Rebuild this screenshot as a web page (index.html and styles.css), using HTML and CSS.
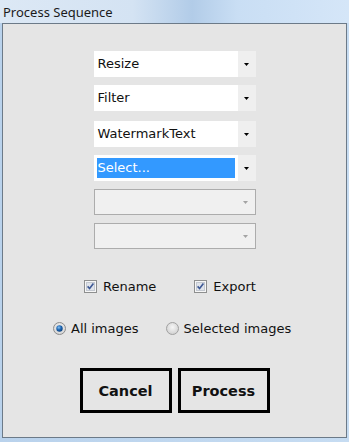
FILE: index.html
```html
<!DOCTYPE html>
<html>
<head>
<meta charset="utf-8">
<link rel="stylesheet" href="styles.css">
</head>
<body>
<div class="window">
  <div class="titlebar"><span class="title">Process Sequence</span></div>
  <div class="panel">
    <div class="combos">
      <div class="combo"><span class="combo-text">Resize</span><span class="combo-btn"><svg width="5" height="3" viewBox="0 0 5 3"><path d="M0 0h5L2.5 3z" fill="#000"/></svg></span></div>
      <div class="combo"><span class="combo-text">Filter</span><span class="combo-btn"><svg width="5" height="3" viewBox="0 0 5 3"><path d="M0 0h5L2.5 3z" fill="#000"/></svg></span></div>
      <div class="combo combo--spaced"><span class="combo-text">WatermarkText</span><span class="combo-btn"><svg width="5" height="3" viewBox="0 0 5 3"><path d="M0 0h5L2.5 3z" fill="#000"/></svg></span></div>
      <div class="combo"><span class="combo-text combo-text--selected">Select...</span><span class="combo-btn"><svg width="5" height="3" viewBox="0 0 5 3"><path d="M0 0h5L2.5 3z" fill="#000"/></svg></span></div>
      <div class="combo combo--disabled"><span class="combo-text"></span><span class="combo-btn"><svg width="5" height="3" viewBox="0 0 5 3"><path d="M0 0h5L2.5 3z" fill="#a3a3a3"/></svg></span></div>
      <div class="combo combo--disabled"><span class="combo-text"></span><span class="combo-btn"><svg width="5" height="3" viewBox="0 0 5 3"><path d="M0 0h5L2.5 3z" fill="#a3a3a3"/></svg></span></div>
    </div>

    <div class="checks">
      <label class="check">
        <svg class="box" width="13" height="13" viewBox="0 0 13 13"><rect x="0.5" y="0.5" width="12" height="12" fill="#f6f6f6" stroke="#8e8f8f"/><rect x="2.5" y="2.5" width="8" height="8" fill="#dfe3ea" stroke="#c3c8d0"/><path d="M3.6 6.4 L5.6 8.6 L9.4 3.6" fill="none" stroke="#3d5894" stroke-width="1.6"/></svg>
        <span>Rename</span>
      </label>
      <label class="check">
        <svg class="box" width="13" height="13" viewBox="0 0 13 13"><rect x="0.5" y="0.5" width="12" height="12" fill="#f6f6f6" stroke="#8e8f8f"/><rect x="2.5" y="2.5" width="8" height="8" fill="#dfe3ea" stroke="#c3c8d0"/><path d="M3.6 6.4 L5.6 8.6 L9.4 3.6" fill="none" stroke="#3d5894" stroke-width="1.6"/></svg>
        <span>Export</span>
      </label>
    </div>

    <div class="radios">
      <label class="radio">
        <svg width="13" height="13" viewBox="0 0 13 13">
          <defs>
            <radialGradient id="rg1" cx="0.5" cy="0.4" r="0.6"><stop offset="0" stop-color="#f2f2f2"/><stop offset="1" stop-color="#d4d4d4"/></radialGradient>
            <radialGradient id="rdot" cx="0.4" cy="0.35" r="0.7"><stop offset="0" stop-color="#86c2f5"/><stop offset="0.5" stop-color="#1f67b3"/><stop offset="1" stop-color="#0b3e7a"/></radialGradient>
          </defs>
          <circle cx="6.5" cy="6.5" r="6" fill="url(#rg1)" stroke="#8c8c8c"/>
          <circle cx="6.5" cy="6.5" r="3.2" fill="url(#rdot)"/>
        </svg>
        <span>All images</span>
      </label>
      <label class="radio">
        <svg width="13" height="13" viewBox="0 0 13 13">
          <defs>
            <radialGradient id="rg2" cx="0.5" cy="0.4" r="0.6"><stop offset="0" stop-color="#f6f6f6"/><stop offset="1" stop-color="#d0d0d0"/></radialGradient>
          </defs>
          <circle cx="6.5" cy="6.5" r="6" fill="url(#rg2)" stroke="#a0a0a0"/>
        </svg>
        <span>Selected images</span>
      </label>
    </div>

    <div class="buttons">
      <button class="btn">Cancel</button>
      <button class="btn">Process</button>
    </div>
  </div>
</div>
</body>
</html>
```
FILE: styles.css
```css
* { box-sizing: border-box; }

body {
  margin: 0;
  font-family: "DejaVu Sans", sans-serif;
}

.window {
  width: 349px;
  height: 442px;
  display: flex;
  flex-direction: column;
  background: linear-gradient(to right, #b9d2ec, #c6dcf2);
}

.titlebar {
  height: 23px;
  display: flex;
  align-items: center;
  padding-left: 3px;
  background: linear-gradient(to right, #dce8f5 0%, #d4e3f3 38%, #b2cce8 55%, #c9def4 68%, #d5e6f8 100%);
}

.title {
  font-family: "Noto Sans", sans-serif;
  font-size: 13px;
  color: #1b1b1b;
}

.panel {
  flex: 1;
  margin: 0 2px 4px 2px;
  border: 1px solid #6c7a88;
  background: #e5e5e5;
  display: flex;
  flex-direction: column;
  align-items: center;
  padding-top: 27px;
}

.combos {
  display: flex;
  flex-direction: column;
  gap: 8px;
}

.combo {
  width: 162px;
  height: 26px;
  background: #ffffff;
  display: flex;
}

.combo--spaced { margin-top: 2px; }

.combo-text {
  flex: 1;
  padding-left: 4px;
  font-size: 13px;
  line-height: 26px;
  color: #111111;
  white-space: nowrap;
}

.combo-text--selected {
  margin: 3px 3px 3px 3px;
  padding-left: 1px;
  line-height: 20px;
  background: #3399ff;
  color: #ffffff;
}

.combo-btn {
  width: 18px;
  background: #efefef;
  display: flex;
  align-items: center;
  justify-content: center;
}

.combo--disabled {
  background: #f0f0f0;
  border: 1px solid #acacac;
}

.combo--disabled .combo-btn {
  background: transparent;
}

.checks {
  align-self: stretch;
  display: flex;
  align-items: center;
  height: 16px;
  margin-top: 29px;
  padding-left: 81px;
  gap: 38px;
}

.check, .radio {
  display: flex;
  align-items: center;
  gap: 6px;
  font-size: 13px;
  color: #111111;
}

.radios {
  align-self: stretch;
  display: flex;
  align-items: center;
  height: 16px;
  margin-top: 26px;
  padding-left: 50px;
  gap: 27px;
}

.radio { gap: 5px; }

.buttons {
  display: flex;
  gap: 6px;
  margin-top: 32px;
}

.btn {
  width: 92px;
  height: 45px;
  border: 3px solid #000000;
  background: transparent;
  font-family: "DejaVu Sans", sans-serif;
  font-weight: bold;
  font-size: 14.5px;
  color: #111111;
  padding: 0;
}
```
